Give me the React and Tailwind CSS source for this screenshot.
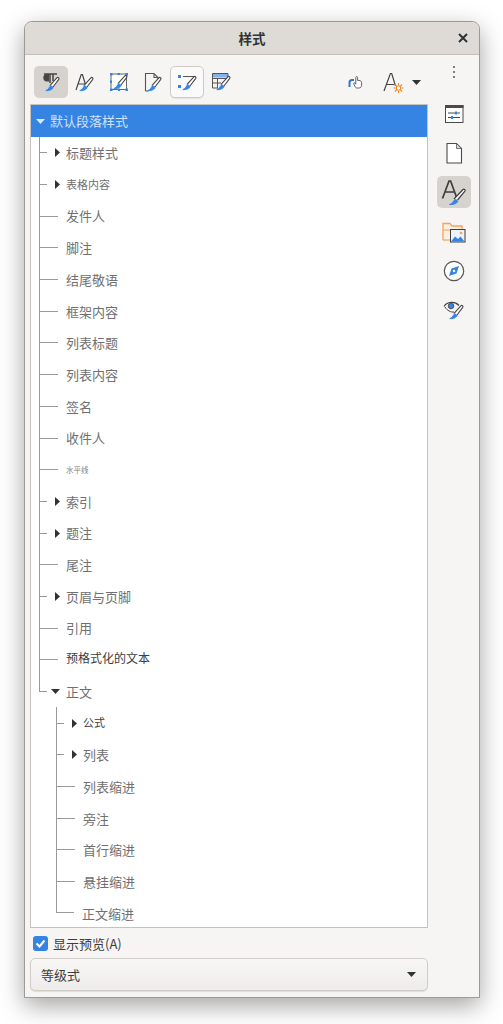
import React from "react";

const BLUE = "#3584e4";
const DARK = "#454545";

function Brush({ x = 0, y = 0 }) {
  return (
    <g transform={`translate(${x + 1.4} ${y + 0.8}) scale(0.9)`}>
      <path d="M10.500 16.500 18.300 7.800c1-1.100 3 .4 2.100 1.700L14 18" fill="#fff" stroke={DARK} strokeWidth="1.200" strokeLinejoin="round" />
      <path d="M6 22c2.400.4 6-.3 7.800-2.500.9-1.300-1.600-3.500-3-2.300-1.400 1.200-1 3.200-4.800 4.800z" fill={BLUE} stroke={BLUE} strokeWidth="1" strokeLinejoin="round" />
    </g>
  );
}

const Svg = ({ children, size = 24 }) => (
  <svg width={size} height={size} viewBox="0 0 24 24" fill="none">{children}</svg>
);

const icons = {
  para: (
    <Svg>
      <path d="M5 4h13M11 4v9" stroke={DARK} strokeWidth="1.500" />
      <path d="M10 4H8a3.600 3.600 0 0 0 0 7.400h2z" fill={DARK} />
      <path d="M14 4v7" stroke={DARK} strokeWidth="1.500" />
      <Brush />
    </Svg>
  ),
  char: (
    <Svg>
      <path d="M3 20 8.200 4.500h1.200L13 16M5.500 14h6.500" stroke={DARK} strokeWidth="1.200" />
      <Brush />
    </Svg>
  ),
  frame: (
    <Svg>
      <rect x="4" y="4" width="15.500" height="15.500" stroke="#666" strokeWidth="1" fill="#fff" />
      <path d="M3 3h2.500v2.500H3zM10.500 3H13v2H10.500zM18.500 3H21v2.500h-2.500zM3 10.500h2V13H3zM3 18.500h2.500V21H3zM11 18.500h2V21h-2zM18.500 18.500H21V21h-2.500z" fill={BLUE} />
      <Brush x={0} y={-2} />
    </Svg>
  ),
  page: (
    <Svg>
      <path d="M4.500 21V3.500H13l4 4V10M13 3.500v4h4M4.500 21H7.500" stroke="#555" strokeWidth="1.100" />
      <Brush />
    </Svg>
  ),
  list: (
    <Svg>
      <path d="M3 5h3v3H3zM3 15h3v3H3z" fill={BLUE} />
      <path d="M8 6.500h12M13 13h4" stroke="#555" strokeWidth="1.100" />
      <Brush x={1} y={-1} />
    </Svg>
  ),
  table: (
    <Svg>
      <path d="M3 3.500h16v4H3z" fill={BLUE} opacity=".6" />
      <path d="M3.500 3.500h15.500v5M3.500 3.500V18H9M3.500 8.500H17M3.500 13H12M8.500 8.500V18" stroke="#555" strokeWidth="1" />
      <Brush x={1} y={-1} />
    </Svg>
  ),
  hand: (
    <svg width="16" height="14" viewBox="0 0 16 14" fill="none">
      <path d="M1.500 12V7.500C1.500 5.500 2.500 5 4 5h2" stroke="#2f78c9" strokeWidth="2" />
      <path d="M7 11.500 5.800 9c-.4-1 .7-1.500 1.300-.7l.7.9V2.500c0-1.300 1.800-1.300 1.800 0v3c1.800-.2 4 .2 4 2v2.800c0 1.600-1.200 2.700-2.900 2.700H8.800C8 13 7.500 12.500 7 11.500z" fill="#fff" stroke="#555" strokeWidth=".9" strokeLinejoin="round" />
    </svg>
  ),
  aNew: (
    <Svg>
      <path d="M3 21 9.400 3.500h1.300L14.500 16M5.800 14.500H13" stroke={DARK} strokeWidth="1.200" />
      <circle cx="17.500" cy="18" r="2.200" fill="#fff" stroke="#f08a24" strokeWidth="1.100" />
      <path d="M17.500 13v2M17.500 21v2M12.500 18h2M20.500 18h2M14 14.500l1.500 1.500M19.500 20l1.500 1.500M14 21.500l1.500-1.500M19.500 16l1.500-1.500" stroke="#f08a24" strokeWidth="1.100" />
    </Svg>
  ),
  props: (
    <Svg>
      <rect x="3.500" y="3.500" width="17.500" height="17" fill="#fff" stroke="#4a4a4a" strokeWidth="1" />
      <rect x="3" y="3" width="18.500" height="3" fill="#4a4a4a" />
      <path d="M6 11h12M6 15.500h12" stroke="#4a4a4a" strokeWidth="1" />
      <path d="M13 9.500h2v3h-2zM9 14h2v3H9z" fill={BLUE} />
    </Svg>
  ),
  doc: (
    <Svg>
      <path d="M5 2.500h9.500L19.500 7.500v14.500H5z" fill="#fff" stroke="#4a4a4a" strokeWidth="1.100" />
      <path d="M14.500 2.500v5H19.500z" fill="#d4d4d4" stroke="#4a4a4a" strokeWidth=".7" />
    </Svg>
  ),
  style: (
    <svg width="28" height="28" viewBox="0 0 28 28" fill="none">
      <path d="M2.500 20.500 9 3h1.600L17 20.500M5.300 14h9.500" stroke="#3d3d3d" strokeWidth="1.700" />
      <path d="M14 21 23 11.500c1-1 2.800.5 1.900 1.700L17.500 22" fill="#fff" stroke="#3d3d3d" strokeWidth="1.200" strokeLinejoin="round" />
      <path d="M9.500 26.500c3 .2 6-.4 8-2.400 1-1.200-1.500-3.200-3-2.100-1.500 1.200-1 3-5 4.500z" fill={BLUE} stroke={BLUE} />
    </svg>
  ),
  gallery: (
    <Svg>
      <path d="M1 20V3.500h7l2 2.500h10v3" stroke="#f3a463" strokeWidth="1.300" fill="#fdeedd" />
      <path d="M1 20h7" stroke="#f3a463" strokeWidth="1.300" />
      <path d="M1 10h21" stroke="#f3a463" strokeWidth="1" />
      <rect x="8.500" y="9.500" width="14.500" height="12.500" fill="#eaf3fc" stroke="#3d3d3d" strokeWidth="1" />
      <path d="M9 21.500l4-5 3 2.500 2.500-2.500 4 5z" fill={BLUE} />
      <circle cx="19" cy="13" r="1.300" fill="#f3a463" />
    </Svg>
  ),
  nav: (
    <Svg>
      <circle cx="12" cy="12" r="9.700" fill="#fff" stroke="#555" strokeWidth="1.200" />
      <path d="M17 7l-2.500 7.500L7 17l2.500-7.500z" fill={BLUE} />
      <circle cx="12" cy="12" r="1.200" fill="#fff" />
    </Svg>
  ),
  inspect: (
    <Svg>
      <path d="M2 8.500C5 3.500 13 3 17 7.500" stroke="#444" strokeWidth="1.200" />
      <path d="M3 9c2 3.500 6 5.500 9 5" stroke="#444" strokeWidth="1" />
      <circle cx="9" cy="8" r="2.800" fill={BLUE} stroke="#444" strokeWidth=".8" />
      <Brush x={1} />
    </Svg>
  ),
};

const Tri = ({ open, color = "#2e3436" }) =>
  open ? (
    <svg width="9" height="5" viewBox="0 0 9 5" className="shrink-0"><path d="M0 0h9L4.500 5z" fill={color} /></svg>
  ) : (
    <svg width="5" height="9" viewBox="0 0 5 9" className="shrink-0"><path d="M0 0l5 4.500L0 9z" fill={color} /></svg>
  );

const Item = ({ text, cls = "text-[13px] text-[#707070]", mode, last }) => (
  <div className="flex h-[31.7px] items-stretch">
    {last ? (
      <div className={`h-1/2 border-b border-l border-[#9a9a9a] ${mode ? "w-[8px]" : "w-[18px]"}`} />
    ) : (
      <div className="flex items-center border-l border-[#9a9a9a]">
        <div className={`h-px bg-[#9a9a9a] ${mode ? "w-[7px]" : "w-[18px]"}`} />
      </div>
    )}
    {mode && (
      <div className="flex w-[13px] items-center justify-end">
        <Tri open={mode === "open"} />
      </div>
    )}
    <div className={`flex items-center ${mode ? "pl-[6px]" : "pl-[8px]"} ${cls}`}>{text}</div>
  </div>
);

const top = [
  ["标题样式", undefined, "c"], ["表格内容", "text-[11px] text-[#707070]", "c"], ["发件人"], ["脚注"], ["结尾敬语"], ["框架内容"],
  ["列表标题"], ["列表内容"], ["签名"], ["收件人"], ["水平线", "text-[7.500px] text-[#808080]"], ["索引", undefined, "c"], ["题注", undefined, "c"],
  ["尾注"], ["页眉与页脚", undefined, "c"], ["引用"], ["预格式化的文本", "text-[12px] text-[#3d3d3d] pb-[4px]"],
];
const sub = [
  ["公式", "text-[11px] text-[#3d3d3d] pb-[1px]", "c"], ["列表", undefined, "c"], ["列表缩进"], ["旁注"], ["首行缩进"], ["悬挂缩进"], ["正文缩进"],
];

const ToolBtn = ({ icon, state }) => (
  <div
    className={`flex h-[32px] w-[34px] items-center justify-center rounded-[5px] ${
      state === "active" ? "bg-[#d6d3ce]" : state === "focus" ? "border border-[#cfccc7] bg-[#fafafa] shadow-[0_1px_1px_rgba(0,0,0,0.08)]" : ""
    }`}
  >
    {icons[icon]}
  </div>
);

export default function App() {
  return (
    <div
      className="min-h-[1024px] w-[503px] bg-white pl-[24px] pt-[21px] text-[#3d3d3d]"
      style={{ fontFamily: '"Noto Sans CJK SC", "Liberation Sans", sans-serif' }}
    >
      <div className="flex h-[977px] w-[456px] flex-col rounded-t-[8px] border border-[#9c9a96] bg-[#f6f5f4] shadow-[0_8px_24px_rgba(0,0,0,0.36)]">
        <div className="flex h-[33px] shrink-0 items-center rounded-t-[8px] border-b border-[#c2bfba] bg-[#dedbd7] pr-[11px]">
          <div className="flex-1 pl-[21px] text-center text-[13.500px] font-bold text-[#2e3436]">样式</div>
          <svg width="10" height="10" viewBox="0 0 10 10"><path d="M1 1l8 8M9 1l-8 8" stroke="#2e3436" strokeWidth="2" /></svg>
        </div>

        <div className="flex min-h-0 flex-1">
          <div className="flex w-[403px] shrink-0 flex-col pl-[5px]">
            <div className="flex items-center pl-[4px] pt-[11px] pb-[6px]">
              <ToolBtn icon="para" state="active" />
              <ToolBtn icon="char" />
              <ToolBtn icon="frame" />
              <ToolBtn icon="page" />
              <ToolBtn icon="list" state="focus" />
              <ToolBtn icon="table" />
              <div className="flex-1" />
              <div className="mr-[3px] flex w-[34px] justify-center">{icons.hand}</div>
              <div className="flex w-[34px] justify-center">{icons.aNew}</div>
              <div className="mr-[7px] ml-[2px] flex items-center"><Tri open /></div>
            </div>

            <div className="h-[824px] shrink-0 overflow-hidden border border-[#c6c3be] bg-white">
              <div className="flex h-[32px] items-center bg-[#3584e4] pl-[5px] text-[13px] text-[#cfe1f8]">
                <Tri open color="#dce9fa" />
                <span className="pl-[5px]">默认段落样式</span>
              </div>
              <div className="pl-[8px]">
                {top.map(([t, c, m]) => <Item key={t} text={t} cls={c} mode={m} />)}
                <Item text="正文" mode="open" last />
                <div className="pl-[17px]">
                  {sub.map(([t, c, m], i) => <Item key={t} text={t} cls={c} mode={m} last={i === sub.length - 1} />)}
                </div>
              </div>
            </div>

            <div className="flex items-center gap-[5px] pl-[3px] pt-[8px]">
              <div className="flex h-[15px] w-[15px] items-center justify-center rounded-[3px] bg-[#3584e4]">
                <svg width="11" height="11" viewBox="0 0 11 11"><path d="M1.500 5.500l3 3 5-6" fill="none" stroke="#fff" strokeWidth="2" /></svg>
              </div>
              <span className="text-[13px] leading-[15px]">显示预览(A)</span>
            </div>

            <div className="mt-[7px] flex h-[33px] shrink-0 items-center justify-between rounded-[5px] border border-[#d0cdc8] bg-gradient-to-b from-[#f8f7f6] to-[#eeecea] pl-[10px] pr-[11px] shadow-[0_1px_1px_rgba(0,0,0,0.1)]">
              <span className="text-[13px]">等级式</span>
              <Tri open />
            </div>
          </div>

          <div className="flex flex-1 flex-col items-center pt-[6px]">
            <div className="flex h-[21px] flex-col items-center justify-center gap-[3px]">
              <i className="h-[2px] w-[2px] rounded-full bg-[#555]" />
              <i className="h-[2px] w-[2px] rounded-full bg-[#555]" />
              <i className="h-[2px] w-[2px] rounded-full bg-[#555]" />
            </div>
            <div className="mt-[20px] flex h-[24px] items-center">{icons.props}</div>
            <div className="mt-[15px] flex h-[24px] items-center">{icons.doc}</div>
            <div className="mt-[11px] flex h-[32px] w-[34px] items-center justify-center rounded-[5px] bg-[#d6d3ce]">{icons.style}</div>
            <div className="mt-[12px] flex h-[24px] items-center">{icons.gallery}</div>
            <div className="mt-[15px] flex h-[24px] items-center">{icons.nav}</div>
            <div className="mt-[15px] flex h-[24px] items-center">{icons.inspect}</div>
          </div>
        </div>
      </div>
    </div>
  );
}
